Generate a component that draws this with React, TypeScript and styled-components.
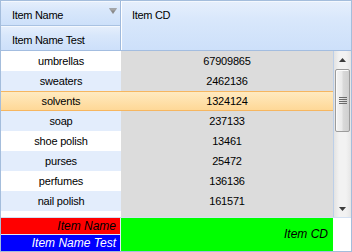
import React from "react";
import styled, { createGlobalStyle, css } from "styled-components";

const GlobalStyle = createGlobalStyle`
  html, body { margin: 0; padding: 0; background: #ffffff; }
  body { font-family: "Liberation Sans", Arial, sans-serif; }
  * { box-sizing: border-box; }
`;

const Grid = styled.div`
  width: 352px;
  height: 252px;
  border: 1px solid #a4bddc;
  display: grid;
  grid-template-rows: 50px 166px 1px 33px;
  background: #ffffff;
  overflow: hidden;
  font-size: 11px;
  color: #000;
`;

const Header = styled.div`
  display: grid;
  grid-template-columns: 120px 1fr;
  border-bottom: 1px solid #a3bde0;
`;

const HeaderLeft = styled.div`
  display: flex;
  flex-direction: column;
  border-right: 1px solid #9fb9dc;
`;

const headerBg = css`
  background: linear-gradient(#e6effc 0%, #d8e7fb 40%, #cde0fa 100%);
  box-shadow: inset 0 1px 0 #f4f8fe;
`;

const HeaderCell = styled.div<{ $divided?: boolean }>`
  ${headerBg};
  height: ${(p) => (p.$divided ? 25 : 24)}px;
  border-bottom: ${(p) => (p.$divided ? "1px solid #a9c2e2" : "none")};
  display: flex;
  align-items: flex-start;
  justify-content: space-between;
  padding: 2px 3px 0 11px;
  line-height: 24px;
  letter-spacing: -0.3px;
`;

const HeaderRight = styled.div`
  ${headerBg};
  border-left: 1px solid #ffffff;
  padding: 2px 0 0 10px;
  line-height: 24px;
  letter-spacing: -0.3px;
`;

const FilterIcon = styled.svg`
  margin-top: 5px;
  flex: none;
`;

const Body = styled.div`
  display: flex;
  height: 166px;
`;

const Rows = styled.div`
  width: 332px;
  height: 166px;
  overflow: hidden;
  background: #dcdcdc;
`;

const Row = styled.div<{ $selected?: boolean }>`
  display: grid;
  grid-template-columns: 120px 212px;
  height: 20px;
  line-height: 20px;
  text-align: center;
  letter-spacing: -0.2px;
  ${(p) =>
    p.$selected &&
    css`
      background: linear-gradient(#ffeac0, #fed897);
      border-top: 1px solid #f6b660;
      border-bottom: 1px solid #f6b660;
      line-height: 18px;
    `}
`;

const NameCell = styled.div<{ $alt?: boolean; $selected?: boolean }>`
  background: ${(p) => (p.$selected ? "transparent" : p.$alt ? "#e3edfc" : "#ffffff")};
  white-space: nowrap;
`;

const CodeCell = styled.div<{ $selected?: boolean }>`
  background: ${(p) => (p.$selected ? "transparent" : "#dcdcdc")};
`;

const VDivider = styled.div`
  width: 1px;
  background: #bccfe8;
`;

const ScrollBar = styled.div`
  width: 17px;
  display: flex;
  flex-direction: column;
  background: linear-gradient(90deg, #e3e3e3, #f2f2f2 30%, #f2f2f2 70%, #e6e6e6);
`;

const ArrowButton = styled.div`
  height: 17px;
  display: flex;
  align-items: center;
  justify-content: center;
`;

const Track = styled.div`
  flex: 1;
  padding: 1px 1px 0 1px;
`;

const Thumb = styled.div`
  height: 63px;
  border: 1px solid #9c9c9c;
  border-radius: 2px;
  background: linear-gradient(90deg, #f4f4f4, #eaeaea 45%, #d9d9d9 55%, #cfcfcf);
  box-shadow: inset 1px 1px 0 #fbfbfb;
  display: flex;
  align-items: center;
  justify-content: center;
`;

const FooterLine = styled.div`
  background: #d3e0f2;
`;

const Footer = styled.div`
  display: grid;
  grid-template-columns: 120px 212px 1fr;
  font-size: 12px;
  font-style: italic;
`;

const FooterLeft = styled.div`
  display: flex;
  flex-direction: column;
  border-right: 1px solid #e4ecf8;
`;

const FooterCell = styled.div<{ $bg: string; $fg: string; $divided?: boolean }>`
  height: ${(p) => (p.$divided ? 17 : 16)}px;
  border-bottom: ${(p) => (p.$divided ? "1px solid #dfe8f6" : "none")};
  background: ${(p) => p.$bg};
  color: ${(p) => p.$fg};
  text-align: right;
  padding-right: 4px;
  line-height: 16px;
  white-space: nowrap;
`;

const FooterGreen = styled.div`
  background: #00ff00;
  text-align: right;
  padding: 8px 5px 0 0;
  line-height: 16px;
`;

const items: [string, string][] = [
  ["umbrellas", "67909865"],
  ["sweaters", "2462136"],
  ["solvents", "1324124"],
  ["soap", "237133"],
  ["shoe polish", "13461"],
  ["purses", "25472"],
  ["perfumes", "136136"],
  ["nail polish", "161571"],
  ["lipstick", ""],
];

const SELECTED = 2;

export default function App() {
  return (
    <>
      <GlobalStyle />
      <Grid>
        <Header>
          <HeaderLeft>
            <HeaderCell $divided>
              <span>Item Name</span>
              <FilterIcon width="8" height="6" viewBox="0 0 8 6">
                <defs>
                  <linearGradient id="fg" x1="0" y1="0" x2="0" y2="1">
                    <stop offset="0" stopColor="#b4b4b4" />
                    <stop offset="1" stopColor="#6e6e6e" />
                  </linearGradient>
                </defs>
                <polygon points="0.5,0.5 7.5,0.5 4,5.5" fill="url(#fg)" stroke="#8a8a8a" strokeWidth="0.6" />
              </FilterIcon>
            </HeaderCell>
            <HeaderCell>
              <span>Item Name Test</span>
            </HeaderCell>
          </HeaderLeft>
          <HeaderRight>Item CD</HeaderRight>
        </Header>
        <Body>
          <Rows>
            {items.map(([name, code], i) => (
              <Row key={name} $selected={i === SELECTED}>
                <NameCell $alt={i % 2 === 1} $selected={i === SELECTED}>
                  {name}
                </NameCell>
                <CodeCell $selected={i === SELECTED}>{code}</CodeCell>
              </Row>
            ))}
          </Rows>
          <VDivider />
          <ScrollBar>
            <ArrowButton>
              <svg width="7" height="4" viewBox="0 0 7 4">
                <polygon points="0,4 7,4 3.5,0" fill="#3c3c3c" />
              </svg>
            </ArrowButton>
            <Track>
              <Thumb>
                <svg width="8" height="8" viewBox="0 0 8 8">
                  <rect x="0" y="0" width="8" height="1" fill="#6a6a6a" />
                  <rect x="0" y="2" width="8" height="1" fill="#6a6a6a" />
                  <rect x="0" y="4" width="8" height="1" fill="#6a6a6a" />
                  <rect x="0" y="6" width="8" height="1" fill="#6a6a6a" />
                </svg>
              </Thumb>
            </Track>
            <ArrowButton>
              <svg width="7" height="4" viewBox="0 0 7 4">
                <polygon points="0,0 7,0 3.5,4" fill="#3c3c3c" />
              </svg>
            </ArrowButton>
          </ScrollBar>
        </Body>
        <FooterLine />
        <Footer>
          <FooterLeft>
            <FooterCell $bg="#ff0000" $fg="#000000" $divided>
              Item Name
            </FooterCell>
            <FooterCell $bg="#0000ff" $fg="#ffffff">
              Item Name Test
            </FooterCell>
          </FooterLeft>
          <FooterGreen>Item CD</FooterGreen>
          <div />
        </Footer>
      </Grid>
    </>
  );
}
